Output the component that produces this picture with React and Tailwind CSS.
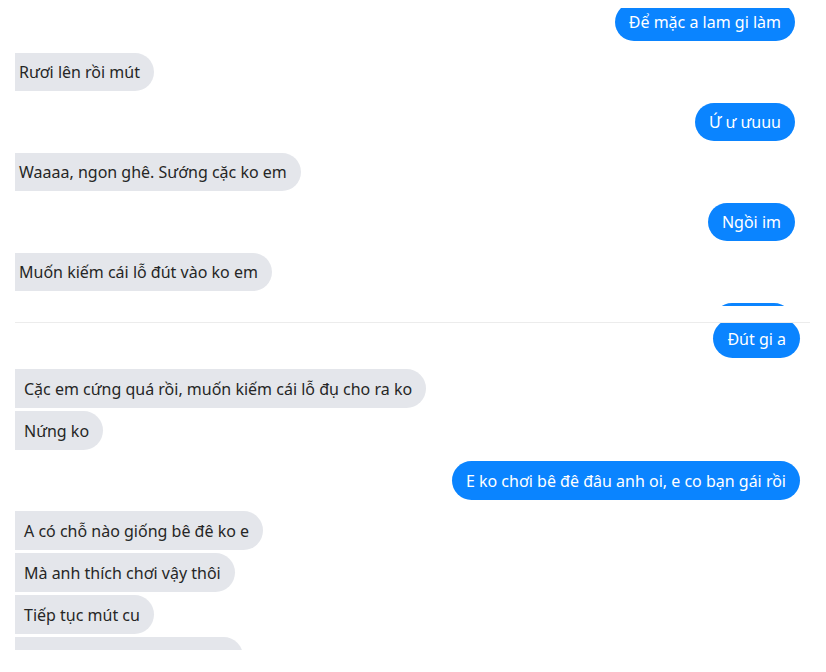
export default function App() {
  const font = { fontFamily: '"Noto Sans", "Open Sans", sans-serif' };
  const blueTop = "flex h-[38px] items-center rounded-full bg-[#0a84ff] px-[14px] text-[16px] text-white";
  const grayTop = "flex h-[38px] items-center rounded-r-full bg-[#e4e6eb] pl-[4px] pr-[14px] text-[16px] text-[#262626]";
  const blueBot = "flex h-[39px] items-center rounded-full bg-[#0a84ff] px-[14px] text-[16px] text-white";
  const grayBot = "flex h-[39px] items-center rounded-r-full bg-[#e4e6eb] pl-[9px] pr-[14px] text-[16px] text-[#262626]";
  return (
    <div className="h-[672px] w-[826px] bg-white" style={font}>
      {/* top screenshot */}
      <div className="h-[8px]" />
      <div className="h-[298px] overflow-hidden">
        <div className="mt-[-5px] flex flex-col gap-[12px] pl-[15px] pr-[31px]">
          <div className="flex justify-end"><div className={blueTop}>Để mặc a lam gi làm</div></div>
          <div className="flex justify-start"><div className={grayTop}>Rươi lên rồi mút</div></div>
          <div className="flex justify-end"><div className={blueTop}>Ứ ư ưuuu</div></div>
          <div className="flex justify-start"><div className={grayTop}>Waaaa, ngon ghê. Sướng cặc ko em</div></div>
          <div className="flex justify-end"><div className={blueTop}>Ngồi im</div></div>
          <div className="flex justify-start"><div className={grayTop}>Muốn kiếm cái lỗ đút vào ko em</div></div>
          <div className="flex justify-end pr-[2px]"><div className="h-[38px] w-[80px] rounded-full bg-[#0a84ff]" /></div>
        </div>
      </div>
      <div className="h-[16px]" />
      <div className="ml-[15px] h-px w-[795px] bg-[#ececec]" />
      {/* bottom screenshot */}
      <div className="h-[327px] overflow-hidden">
        <div className="mt-[-4px] flex flex-col pl-[15px] pr-[26px]">
          <div className="flex justify-end"><div className={blueBot}>Đút gi a</div></div>
          <div className="mt-[11px] flex flex-col items-start gap-[3px]">
            <div className={grayBot}>Cặc em cứng quá rồi, muốn kiếm cái lỗ đụ cho ra ko</div>
            <div className={grayBot}>Nứng ko</div>
          </div>
          <div className="mt-[11px] flex justify-end"><div className={blueBot}>E ko chơi bê đê đâu anh oi, e co bạn gái rồi</div></div>
          <div className="mt-[11px] flex flex-col items-start gap-[3px]">
            <div className={grayBot}>A có chỗ nào giống bê đê ko e</div>
            <div className={grayBot}>Mà anh thích chơi vậy thôi</div>
            <div className={grayBot}>Tiếp tục mút cu</div>
            <div className="h-[39px] w-[228px] rounded-r-full bg-[#e4e6eb]" />
          </div>
        </div>
      </div>
    </div>
  );
}
